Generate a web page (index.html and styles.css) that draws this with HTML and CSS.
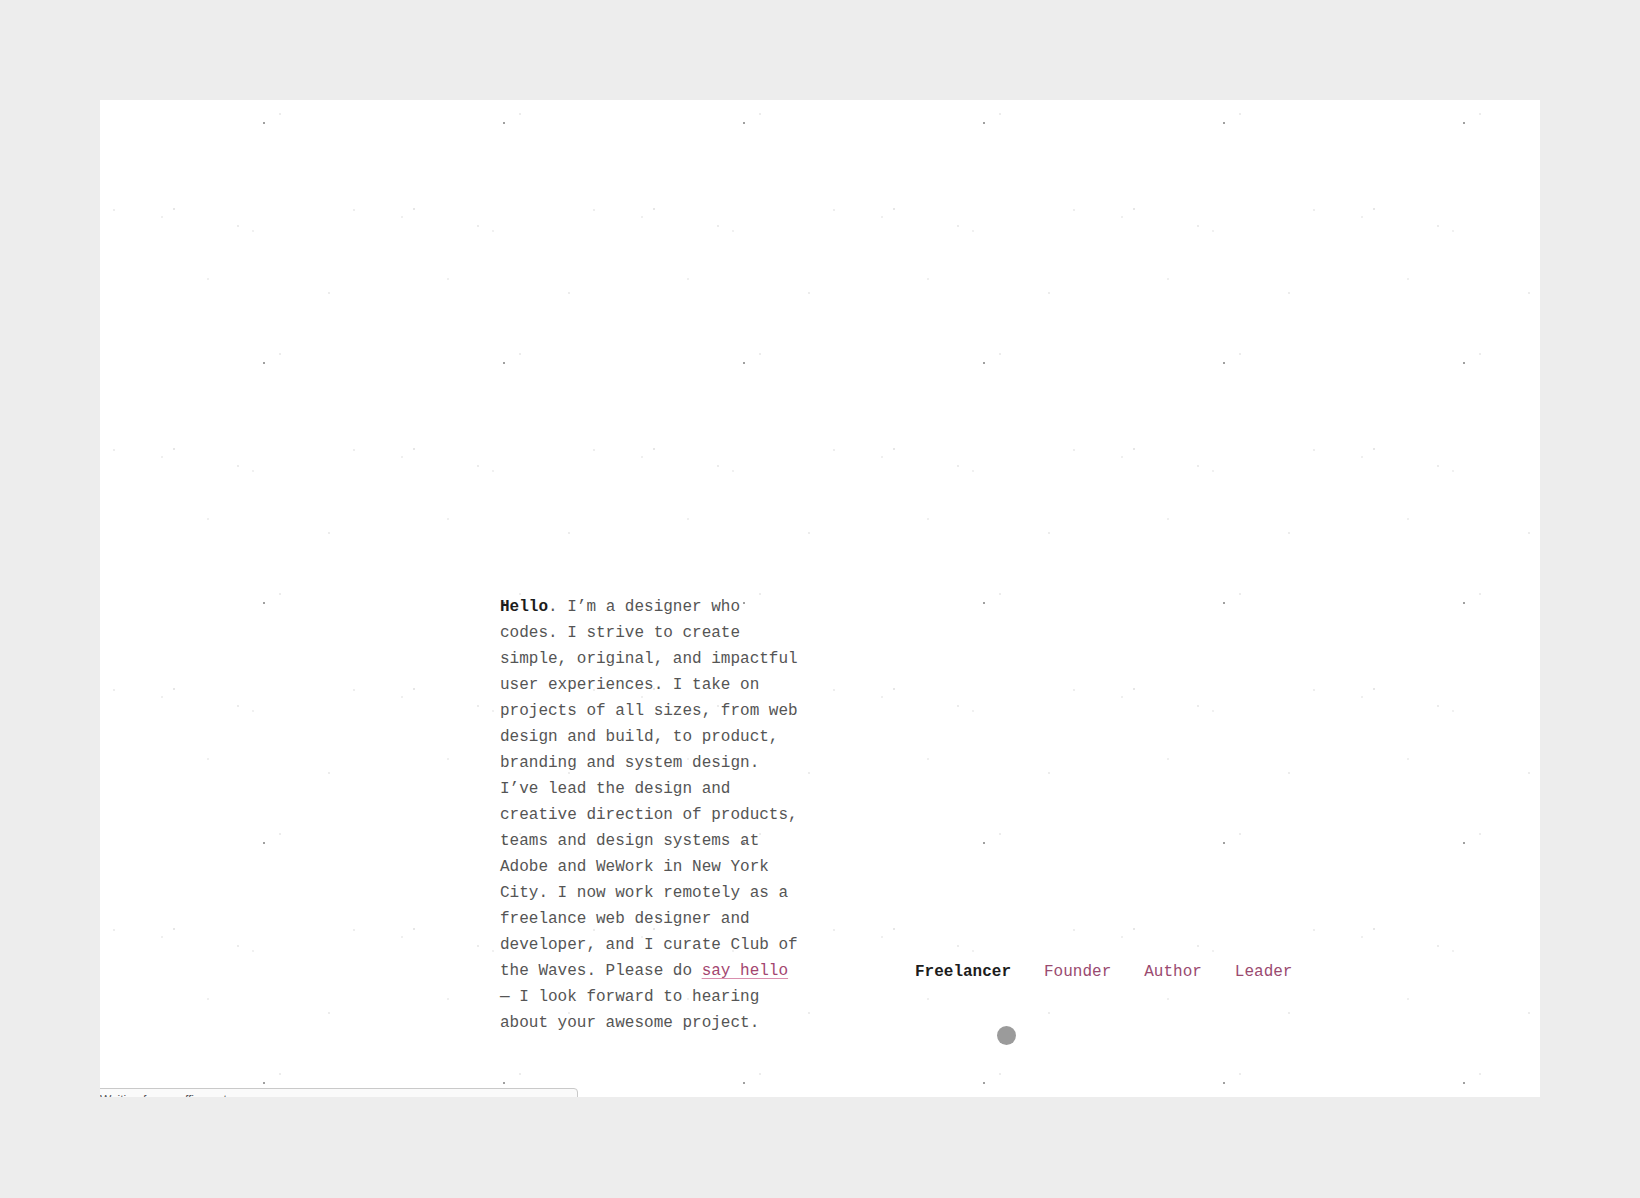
FILE: index.html
```html
<!DOCTYPE html>
<html lang="en">
<head>
    <meta charset="UTF-8">
    <meta name="viewport" content="width=device-width, initial-scale=1.0">
    <title>Designer who codes</title>

    <link rel="stylesheet" href="styles.css">
</head>
<body>
    <div class="page">
        <p class="intro">
            <strong>Hello</strong>. I’m a designer who codes. I strive to create simple, original, and impactful user experiences. I take on projects of all sizes, from web design and build, to product, branding and system design. I’ve lead the design and creative direction of products, teams and design systems at Adobe and WeWork in New York City. I now work remotely as a freelance web designer and developer, and I curate Club of the Waves. Please do <a href="#">say hello</a> — I look forward to hearing about your awesome project.
        </p>

        <div class="roles">
            <nav class="role-tabs">
                <a href="#" class="active">Freelancer</a>
                <a href="#">Founder</a>
                <a href="#">Author</a>
                <a href="#">Leader</a>
            </nav>
            <span class="dot"></span>
        </div>

        <!-- status bubble along the bottom edge -->
        <div class="status">Waiting for cssoffive.net...</div>
    </div>
</body>
</html>
```

FILE: styles.css
```css
body {
    margin: 0;
    padding: 100px;
    background: #ededed;
    font-family: "Liberation Mono", "Courier New", monospace;
}

/* white sheet with a faint speckle grid */
.page {
    position: relative;
    overflow: hidden;
    box-sizing: border-box;
    width: 1440px;
    height: 997px;
    padding: 0 0 61px 400px;
    display: flex;
    align-items: flex-end;
    background-color: #fff;
    background-image:
        radial-gradient(circle at 164px 23px, #a0a0a0 0.9px, transparent 1.4px),
        radial-gradient(circle at 180px 14px, #ececec 0.7px, transparent 1.2px),
        radial-gradient(circle at 247px 24px, #efefef 0.7px, transparent 1.2px),
        radial-gradient(circle at 74px 109px, #e6e6e6 0.7px, transparent 1.2px),
        radial-gradient(circle at 62px 117px, #efefef 0.7px, transparent 1.2px),
        radial-gradient(circle at 14px 110px, #ededed 0.7px, transparent 1.2px),
        radial-gradient(circle at 138px 126px, #ebebeb 0.7px, transparent 1.2px),
        radial-gradient(circle at 153px 131px, #f0f0f0 0.7px, transparent 1.2px),
        radial-gradient(circle at 108px 179px, #efefef 0.7px, transparent 1.2px),
        radial-gradient(circle at 229px 193px, #ececec 0.7px, transparent 1.2px);
    background-size: 240px 240px;
}

.intro {
    width: 300px;
    margin: 0;
    font-size: 16px;
    line-height: 26px;
    color: #555;
}

.intro strong {
    color: #1c1c1c;
}

.intro a {
    color: #a3456f;
    text-decoration: underline;
    text-decoration-color: #d98fae;
    text-underline-offset: 3px;
}

.roles {
    margin-left: 115px;
    margin-bottom: -9px;
    display: flex;
    flex-direction: column;
}

.role-tabs {
    display: flex;
    gap: 33px;
    font-size: 16px;
    line-height: 26px;
}

.role-tabs a {
    color: #9a4a70;
    text-decoration: none;
}

.role-tabs a.active {
    color: #1c1c1c;
    font-weight: bold;
}

.dot {
    width: 19px;
    height: 19px;
    margin: 41px 0 0 82px;
    border-radius: 50%;
    background: #9b9b9b;
}

.status {
    position: absolute;
    left: -1px;
    top: 988px;
    width: 479px;
    height: 22px;
    box-sizing: border-box;
    padding: 4px 0 0 0;
    border: 1px solid #c9c9c9;
    border-top-right-radius: 4px;
    background: #fafafa;
    font-family: "Liberation Sans", Arial, sans-serif;
    font-size: 12px;
    color: #555;
    white-space: nowrap;
}
```
